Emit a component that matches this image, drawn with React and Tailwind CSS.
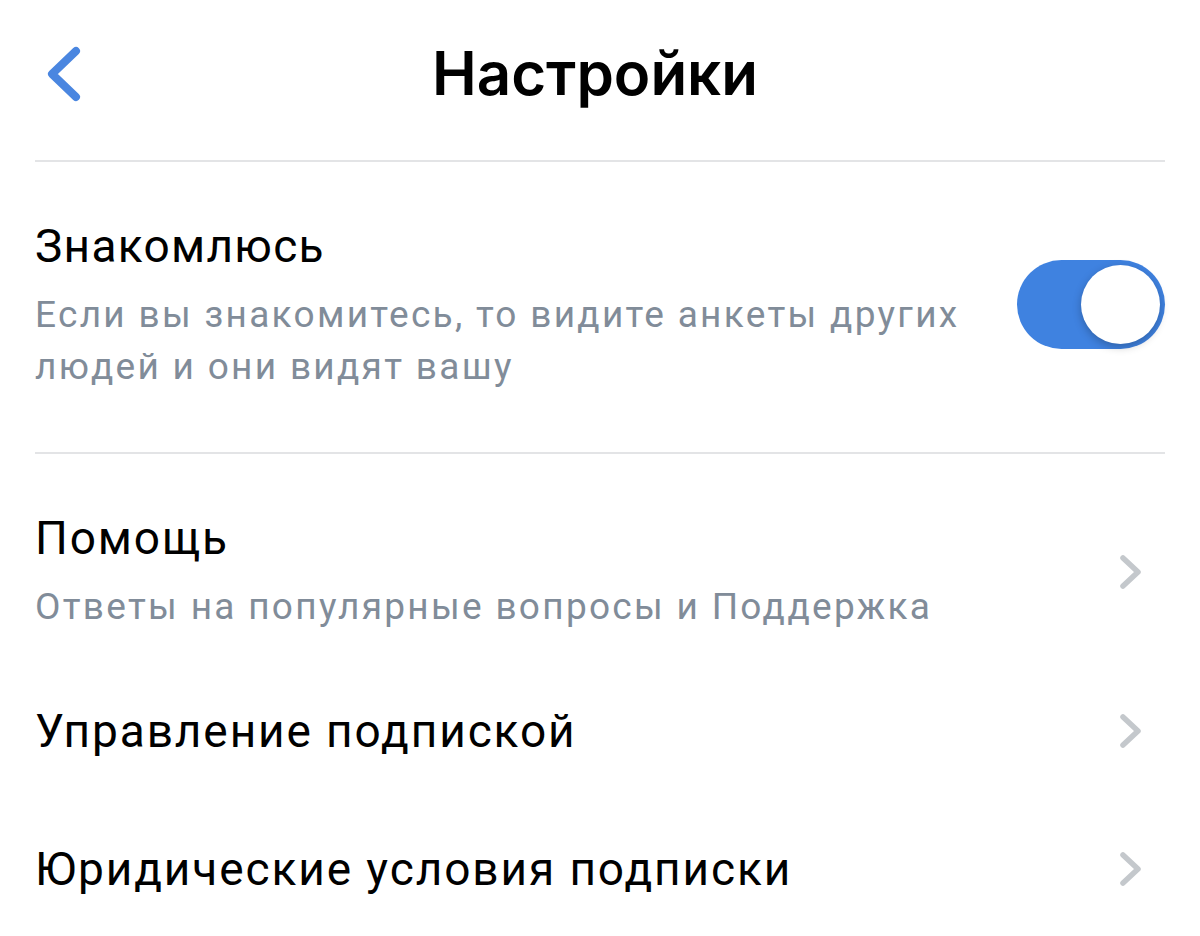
import React from "react";

function Chevron({ className }) {
  return (
    <svg viewBox="0 0 24 36" className={className} fill="none">
      <path
        d="M4 4 L19 18 L4 32"
        stroke="currentColor"
        strokeWidth="5.5"
        strokeLinecap="round"
        strokeLinejoin="round"
      />
    </svg>
  );
}

function NavRow({ title, subtitle, className = "" }) {
  return (
    <div className={`flex items-center justify-between ${className}`}>
      <div className="flex flex-col">
        <span className="text-[46px] leading-[56px] text-black tracking-[1.9px]">{title}</span>
        {subtitle && (
          <span className="text-[37px] leading-[52px] text-[#818c99] tracking-[2.3px] mt-[15px]">
            {subtitle}
          </span>
        )}
      </div>
      <Chevron className="w-[24px] h-[36px] mr-[22px] text-[#c4c8cc]" />
    </div>
  );
}

export default function App() {
  return (
    <div
      className="w-[1200px] h-[936px] bg-white overflow-hidden px-[35px]"
      style={{ fontFamily: "Roboto, 'Noto Sans', sans-serif" }}
    >
      {/* header */}
      <div className="relative h-[162px] flex items-center justify-center border-b-2 border-[#e3e4e6]">
        <svg
          viewBox="0 0 40 62"
          className="absolute left-[8px] top-[43px] w-[40px] h-[62px] text-[#4a86e0]"
          fill="none"
        >
          <path
            d="M33 8 L9 31 L33 54"
            stroke="currentColor"
            strokeWidth="8"
            strokeLinecap="round"
            strokeLinejoin="round"
          />
        </svg>
        <h1
          className="text-[60px] font-semibold text-black -mt-[14px] mr-[10px]"
          style={{ fontFamily: "Inter, 'Open Sans', sans-serif" }}
        >
          Настройки
        </h1>
      </div>

      {/* dating toggle */}
      <div className="h-[292px] flex items-start justify-between border-b-2 border-[#e3e4e6] pt-[56px]">
        <div className="flex flex-col">
          <span className="text-[46px] leading-[56px] text-black tracking-[1.3px]">Знакомлюсь</span>
          <span className="text-[37px] leading-[52px] text-[#818c99] tracking-[2.3px] mt-[15px] max-w-[940px]">
            Если вы знакомитесь, то видите анкеты других людей и они видят вашу
          </span>
        </div>
        <div className="mt-[42px] w-[148px] h-[89px] rounded-full bg-[#3f82e0] flex items-center justify-end pr-[5px] shrink-0">
          <div className="w-[79px] h-[79px] rounded-full bg-white shadow-[0_3px_8px_rgba(0,0,0,0.25)]" />
        </div>
      </div>

      {/* links */}
      <NavRow
        title="Помощь"
        subtitle="Ответы на популярные вопросы и Поддержка"
        className="pt-[56px]"
      />
      <NavRow title="Управление подпиской" className="mt-[70px]" />
      <NavRow title="Юридические условия подписки" className="mt-[82px]" />
    </div>
  );
}
